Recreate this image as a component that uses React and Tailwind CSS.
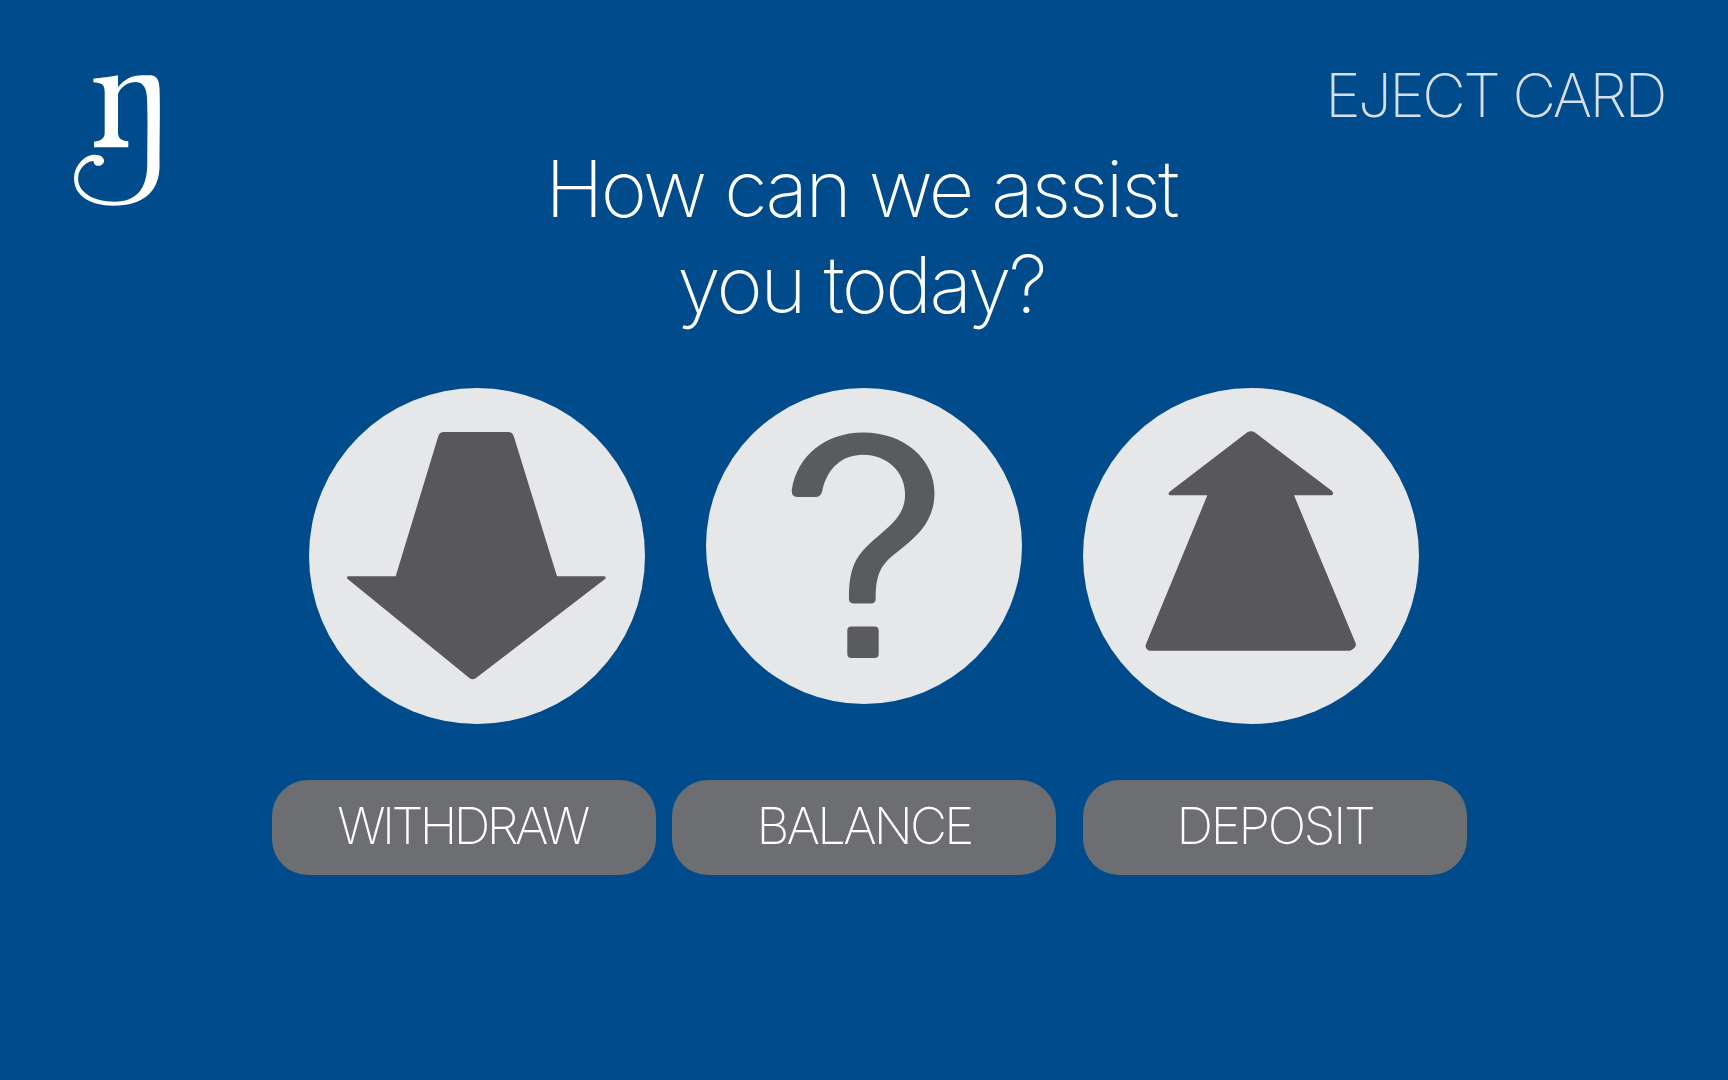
import React from 'react';

function Logo() {
  return (
    <svg viewBox="73 73 258 394" className="block w-[86px] h-[131px]">
      <path
        fill="#ffffff"
        d="M 131 84 C 155 82 185 78 205 74 L 205 110 C 225 84 250 74 275 74 L 305 74 C 322 76 329 88 330 115 C 332 170 330 250 330 345 C 330 420 285 466 190 466 C 120 466 73 435 73 385 C 73 345 105 313 135 313 C 152 313 163 322 163 331 C 163 340 155 346 146 346 C 135 346 131 338 132 332 C 115 332 85 350 85 385 C 85 425 130 454 195 454 C 265 454 293 410 293 340 C 293 270 295 190 292 140 C 290 112 282 96 260 94 C 235 94 213 108 205 130 L 205 245 C 205 265 215 270 236 272 L 236 290 L 133 290 L 133 274 C 155 270 165 265 165 245 L 165 125 C 165 100 155 97 131 95 Z"
      />
    </svg>
  );
}

function DownArrow() {
  return (
    <svg viewBox="58 54 1008 1008" className="block w-full h-full">
      <path
        fill="#58585a"
        d="M 462 186 H 656 Q 668 186 672 198 L 802 619 H 942 Q 952 619 946 627 L 558 925 Q 549 931 540 925 L 174 627 Q 168 619 178 619 H 318 L 446 198 Q 450 186 462 186 Z"
      />
    </svg>
  );
}

function QuestionMark() {
  return (
    <svg viewBox="49 54 946 946" className="block w-full h-full">
      <path
        fill="#5a5b5d"
        d="M 306 358 C 322 258 405 187 520 187 C 640 187 733 265 733 368 C 733 445 690 490 640 530 C 585 574 557 590 557 684 Q 557 699 542 699 H 490 Q 477 699 477 686 C 477 590 495 555 565 497 C 615 455 645 425 645 372 C 645 305 590 254 520 254 C 455 254 412 295 397 362 Q 393 380 376 380 H 322 Q 304 380 306 358 Z"
      />
      <rect x="472" y="768" width="94" height="94" rx="12" fill="#5a5b5d" />
    </svg>
  );
}

function UpArrow() {
  return (
    <svg viewBox="39 54 1008 1008" className="block w-full h-full">
      <path
        fill="#58585a"
        d="M 532 187 Q 543 180 554 187 L 787 364 Q 793 376 782 376 H 672 L 857 820 Q 860 828 852 835 Q 845 842 838 842 H 240 Q 232 842 228 833 Q 225 828 229 820 L 412 376 H 302 Q 292 376 298 366 Z"
      />
    </svg>
  );
}

function ActionButton({ label, className = '' }) {
  return (
    <button className={`h-[95px] rounded-[36px] bg-[#6d6e71] text-white text-[51px] leading-[90px] pb-[3px] font-[150] ${className}`}>
      {label}
    </button>
  );
}

export default function App() {
  return (
    <div className="min-h-screen bg-[#004b8b] font-['Inter',sans-serif]">
      <header className="grid grid-cols-[1fr_auto_1fr] items-start">
        <div className="pl-[74px] pt-[75px]">
          <Logo />
        </div>
        <h1 className="pt-[140px] pr-[6px] text-center text-white text-[79px] leading-[96px] font-[170] tracking-[-0.033em]">
          How can we assist
          <br />
          you today?
        </h1>
        <div className="flex justify-end pr-[63px] pt-[59px]">
          <span className="text-[#d5deea] text-[60px] leading-[72px] font-[150] tracking-[-0.042em]">EJECT CARD</span>
        </div>
      </header>

      <div className="flex justify-center items-start gap-[61px] mt-[56px]">
        <div className="w-[336px] h-[336px] rounded-full bg-[#e6e7e8]">
          <DownArrow />
        </div>
        <div className="w-[316px] h-[316px] rounded-full bg-[#e6e7e8]">
          <QuestionMark />
        </div>
        <div className="w-[336px] h-[336px] rounded-full bg-[#e6e7e8]">
          <UpArrow />
        </div>
      </div>

      <div className="flex pl-[272px] mt-[56px]">
        <ActionButton label="WITHDRAW" className="w-[384px] pr-[4px] tracking-[-0.07em]" />
        <ActionButton label="BALANCE" className="w-[384px] ml-[16px] tracking-[-0.055em]" />
        <ActionButton label="DEPOSIT" className="w-[384px] ml-[27px] tracking-[-0.045em]" />
      </div>
    </div>
  );
}
